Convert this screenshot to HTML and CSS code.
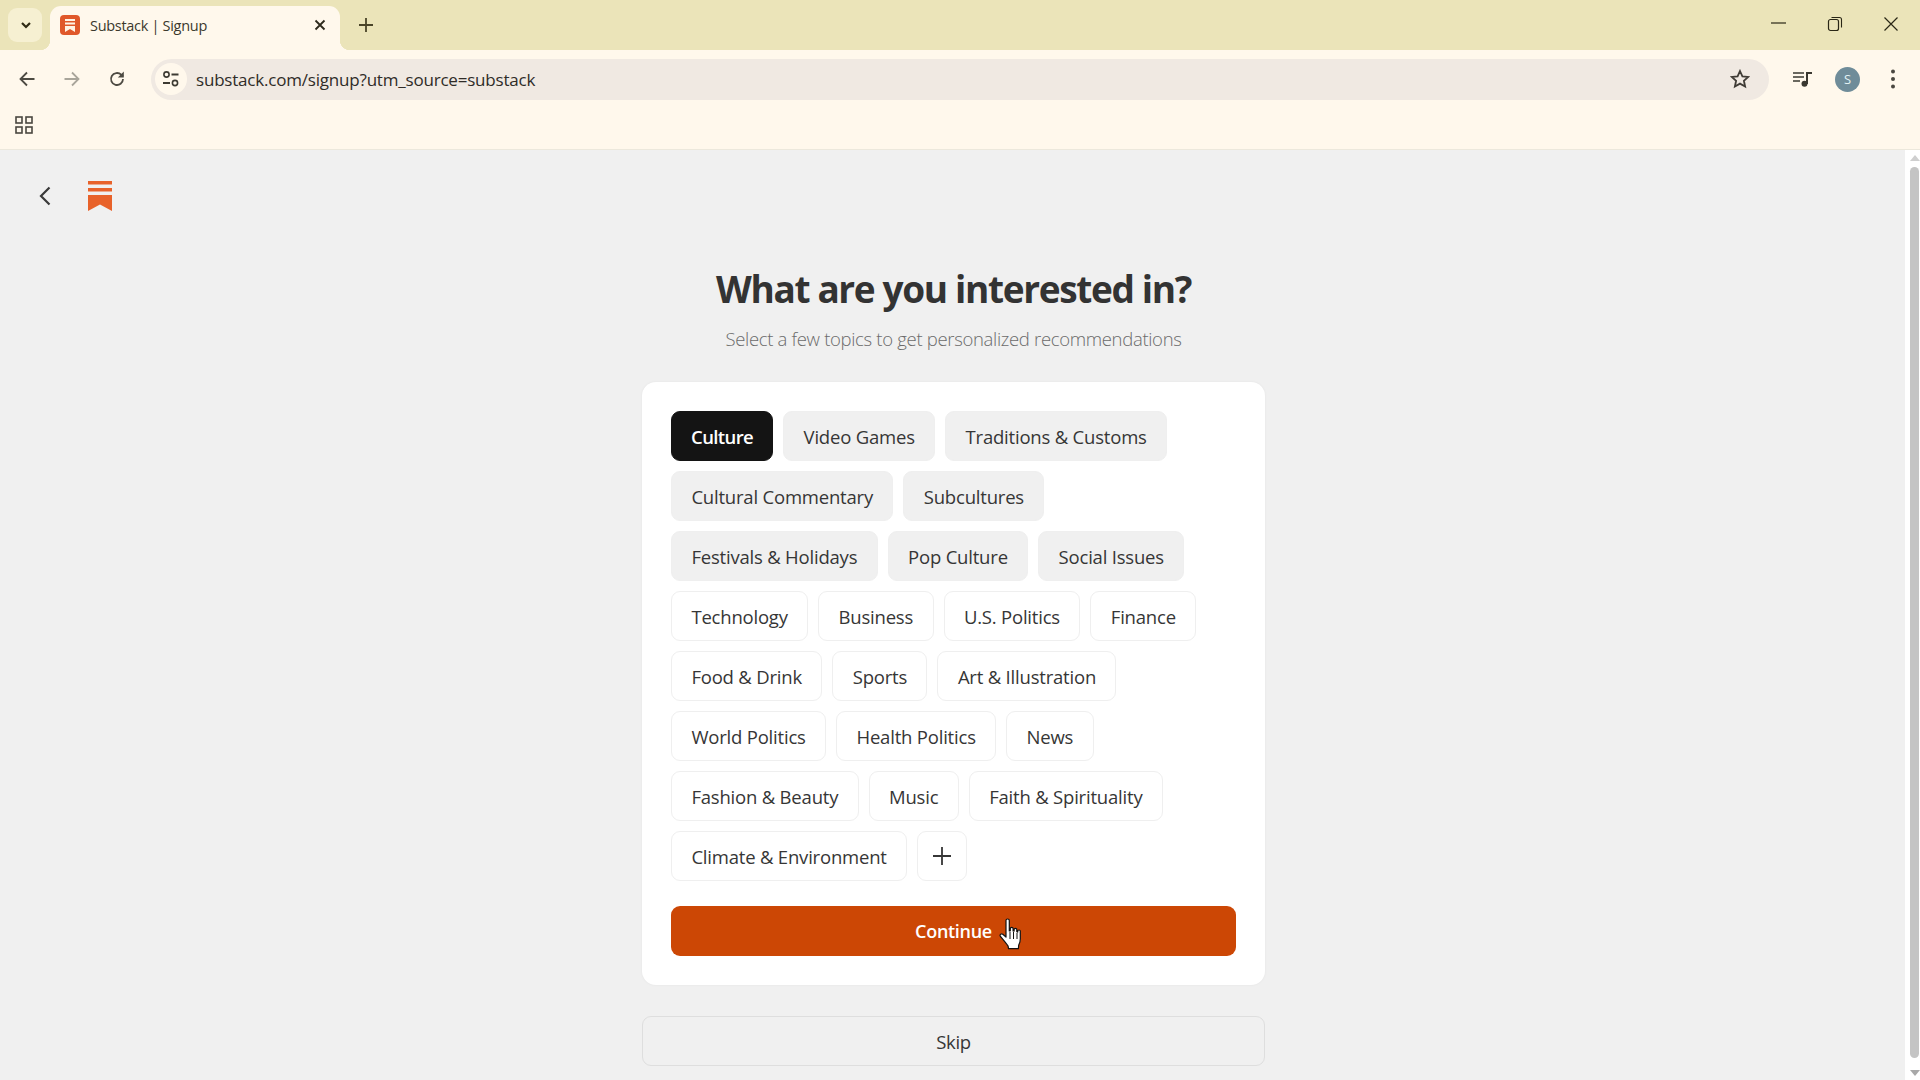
FILE: index.html
```html
<!DOCTYPE html>
<html lang="en">
<head>
<meta charset="utf-8">
<title>Substack | Signup</title>
<link rel="stylesheet" href="styles.css">
</head>
<body>
<header class="chrome">
  <div class="tabstrip">
    <button class="tablist" aria-label="Search tabs"><svg width="14" height="14" viewBox="0 0 14 14"><path d="M3 5l4 4 4-4" fill="none" stroke="#2f2a14" stroke-width="2.200"/></svg></button>
    <div class="tab">
      <svg class="favicon" width="20" height="20" viewBox="0 0 20 20"><rect width="20" height="20" rx="4" fill="#e0582a"/><path d="M5 4h10v2H5zM5 7.500h10v2H5zM5 11h10v6l-5-3-5 3z" fill="#fff3e4"/></svg>
      <span class="tab-title">Substack | Signup</span>
      <svg class="tab-close" width="12" height="12" viewBox="0 0 12 12"><path d="M1.500 1.500l9 9M10.500 1.500l-9 9" stroke="#2d2a1c" stroke-width="1.800"/></svg>
    </div>
    <svg class="newtab" width="14" height="14" viewBox="0 0 14 14"><path d="M7 0v14M0 7h14" stroke="#4a4428" stroke-width="1.800"/></svg>
    <div class="winctl">
      <svg width="16" height="16" viewBox="0 0 16 16"><path d="M0 7h15" stroke="#2a2716" stroke-width="1.200"/></svg>
      <svg width="16" height="16" viewBox="0 0 16 16"><rect x="1.500" y="3.500" width="10" height="11" rx="2" fill="none" stroke="#2a2716" stroke-width="1.200"/><path d="M4.500 1.500h8a2 2 0 0 1 2 2v8" fill="none" stroke="#2a2716" stroke-width="1.100"/></svg>
      <svg width="16" height="16" viewBox="0 0 16 16"><path d="M1.500 1.500l13 13M14.500 1.500l-13 13" stroke="#2a2716" stroke-width="1.200"/></svg>
    </div>
  </div>
  <div class="toolbar">
    <svg class="tb-ic" width="18" height="18" viewBox="0 0 18 18"><path d="M16.500 9H2.500M9 2.500L2.500 9 9 15.500" fill="none" stroke="#4d4a42" stroke-width="1.800"/></svg>
    <svg class="tb-ic" width="18" height="18" viewBox="0 0 18 18"><path d="M1.500 9h14M9 2.500L15.500 9 9 15.500" fill="none" stroke="#a9a59a" stroke-width="1.800"/></svg>
    <svg class="tb-ic" width="18" height="18" viewBox="0 0 18 18"><path d="M15 9a6 6 0 1 1-1.800-4.300L15 6.500" fill="none" stroke="#4d4a42" stroke-width="1.800"/><path d="M15.800 1.500v6h-6z" fill="#4d4a42"/></svg>
    <div class="omnibox">
      <span class="siteinfo"><svg width="18" height="18" viewBox="0 0 18 18"><circle cx="4.500" cy="4.500" r="2.600" fill="none" stroke="#3d3a32" stroke-width="1.600"/><path d="M9.500 4.500h7M1 13h7" stroke="#3d3a32" stroke-width="1.800"/><circle cx="13" cy="13" r="2.600" fill="none" stroke="#3d3a32" stroke-width="1.600"/></svg></span>
      <span class="url">substack.com/signup?utm_source=substack</span>
      <svg class="star" width="20" height="20" viewBox="0 0 20 20"><path d="M10 2l2.400 5.300 5.800.6-4.300 3.900 1.200 5.700-5.100-2.900-5.100 2.900 1.200-5.700L1.800 7.900l5.800-.6z" fill="none" stroke="#403c36" stroke-width="1.800"/></svg>
    </div>
    <div class="tb-right">
      <svg width="20" height="16" viewBox="0 0 20 16"><path d="M0 2h11M0 6h11M0 10h7" stroke="#3a3830" stroke-width="1.600"/><path d="M14 13V2h5" fill="none" stroke="#3a3830" stroke-width="2"/><circle cx="11.500" cy="12.800" r="3" fill="#3a3830"/></svg>
      <span class="avatar">S</span>
      <svg class="menu-dots" width="6" height="20" viewBox="0 0 6 20"><circle cx="3" cy="2.500" r="2" fill="#4a4740"/><circle cx="3" cy="10" r="2" fill="#4a4740"/><circle cx="3" cy="17.500" r="2" fill="#4a4740"/></svg>
    </div>
  </div>
  <div class="bookmarks">
    <svg width="18" height="18" viewBox="0 0 18 18"><g fill="none" stroke="#4a4740" stroke-width="1.600"><rect x="1" y="1" width="6" height="6"/><rect x="11" y="1" width="6" height="6"/><rect x="1" y="11" width="6" height="6"/><rect x="11" y="11" width="6" height="6"/></g></svg>
  </div>
</header>
<div class="viewport">
  <main class="page">
    <nav class="topnav">
      <svg width="12" height="20" viewBox="0 0 12 20"><path d="M10.500 1.500L2 10l8.500 8.500" fill="none" stroke="#3a3a3a" stroke-width="2.200"/></svg>
      <svg width="24" height="30" viewBox="0 0 24 30"><path d="M0 0h24v3.500H0zM0 7h24v3.500H0zM0 14h24v16l-12-6.500L0 30z" fill="#e8622a"/></svg>
    </nav>
    <section class="signup">
      <h1 class="title">What are you interested in?</h1>
      <p class="subtitle">Select a few topics to get personalized recommendations</p>
      <div class="card">
        <div class="chips">
          <span class="chip is-active">Culture</span>
          <span class="chip is-related">Video Games</span>
          <span class="chip is-related">Traditions &amp; Customs</span>
          <span class="chip is-related">Cultural Commentary</span>
          <span class="chip is-related">Subcultures</span>
          <span class="chip is-related">Festivals &amp; Holidays</span>
          <span class="chip is-related">Pop Culture</span>
          <span class="chip is-related">Social Issues</span>
          <span class="chip">Technology</span>
          <span class="chip">Business</span>
          <span class="chip">U.S. Politics</span>
          <span class="chip">Finance</span>
          <span class="chip">Food &amp; Drink</span>
          <span class="chip">Sports</span>
          <span class="chip">Art &amp; Illustration</span>
          <span class="chip">World Politics</span>
          <span class="chip">Health Politics</span>
          <span class="chip">News</span>
          <span class="chip">Fashion &amp; Beauty</span>
          <span class="chip">Music</span>
          <span class="chip">Faith &amp; Spirituality</span>
          <span class="chip">Climate &amp; Environment</span>
          <span class="chip chip-more"><svg width="18" height="18" viewBox="0 0 18 18"><path d="M9 0v18M0 9h18" stroke="#363636" stroke-width="1.800"/></svg></span>
        </div>
        <button class="continue">Continue
          <svg class="cursor" width="26" height="34" viewBox="0 0 26 34"><path d="M7 2.500c0-2 3.300-2 3.300 0V13l1-.2V10.500c0-1.600 2.800-1.600 2.800 0v2.500l1 .2v-1.700c0-1.600 2.700-1.600 2.700 0v2.300l.9.300v-1c0-1.500 2.600-1.500 2.600 0v8c0 3-.6 4-1.600 6l-.3 3.500H9.500l-.4-2.500C7 25 4 21.500 1.500 18.500c-1.300-1.600.6-3.400 2.300-2.300L7 19z" fill="#fff" stroke="#111" stroke-width="1.200" stroke-linejoin="round"/><path d="M11 14v7M14.500 14v7M18 15v6" stroke="#111" stroke-width="1"/></svg>
        </button>
      </div>
      <button class="skip">Skip</button>
    </section>
  </main>
  <aside class="scrollbar">
    <span class="arrow-up"></span>
    <span class="thumb"></span>
    <span class="arrow-down"></span>
  </aside>
</div>
</body>
</html>
```
FILE: styles.css
```css
* { box-sizing: border-box; }
html, body { margin: 0; height: 100%; overflow: hidden; }
body {
  display: flex;
  flex-direction: column;
  font-family: "Open Sans", "Noto Sans", sans-serif;
  background: #f0f0f0;
  color: #363636;
}
.chrome { flex: none; }
.tabstrip {
  height: 50px;
  background: #ebe4b9;
  display: flex;
  align-items: flex-start;
  padding-left: 8px;
}
.tablist {
  width: 34px;
  height: 34px;
  margin-top: 8px;
  border: 0;
  border-radius: 9px;
  background: #f6f0d2;
  display: flex;
  align-items: center;
  justify-content: center;
  padding: 0 0 0 2px;
}
.tab {
  position: relative;
  width: 290px;
  height: 44px;
  margin: 6px 0 0 8px;
  background: #fff8ec;
  border-radius: 11px 11px 0 0;
  display: flex;
  align-items: center;
  padding: 0 14px 6px 10px;
  gap: 10px;
}
.tab::before, .tab::after {
  content: "";
  position: absolute;
  bottom: 0;
  width: 10px;
  height: 10px;
}
.tab::before { left: -10px; background: radial-gradient(circle at 0 0, transparent 10px, #fff8ec 10.500px); }
.tab::after { right: -10px; background: radial-gradient(circle at 100% 0, transparent 10px, #fff8ec 10.500px); }
.tab-title {
  flex: 1;
  font-size: 14.500px;
  color: #3b382c;
  letter-spacing: -0.3px;
}
.newtab { margin: 18px 0 0 19px; }
.winctl {
  margin-left: auto;
  display: flex;
  gap: 40px;
  padding: 16px 21px 0 0;
}
.toolbar {
  height: 50px;
  background: #fff8ec;
  display: flex;
  align-items: center;
  padding: 8px 24px 0 18px;
  position: relative;
}
.tb-ic { margin-right: 27px; flex: none; }
.tb-ic:nth-child(3) { margin-right: 25px; }
.omnibox {
  width: 1618px;
  height: 41px;
  background: #f0e9e2;
  border-radius: 21px;
  display: flex;
  align-items: center;
  padding: 0 19px 0 4px;
}
.siteinfo {
  width: 32px;
  height: 32px;
  border-radius: 50%;
  background: #fff8ec;
  display: flex;
  align-items: center;
  justify-content: center;
  margin-right: 9px;
}
.url {
  flex: 1;
  font-size: 17px;
  color: #2f2c28;
  letter-spacing: -0.2px;
}
.tb-right {
  flex: 1;
  display: flex;
  align-items: center;
  justify-content: flex-end;
  gap: 22px;
}
.menu-dots { margin-left: 8px; }
.avatar {
  width: 25px;
  height: 25px;
  border-radius: 50%;
  background: #6f8c99;
  color: #e3f2f4;
  font-size: 13px;
  display: flex;
  align-items: center;
  justify-content: center;
}
.bookmarks {
  height: 50px;
  background: #fff8ec;
  border-bottom: 1px solid #ece8dc;
  display: flex;
  align-items: center;
  padding-left: 15px;
}
.viewport {
  flex: 1;
  min-height: 0;
  display: flex;
}
.page {
  flex: 1;
  min-width: 0;
  background: #f0f0f0;
}
.topnav {
  height: 66px;
  padding: 31px 0 0 39px;
  display: flex;
  align-items: flex-start;
  gap: 37px;
}
.topnav svg:first-child { margin-top: 5px; }
.signup {
  width: 625px;
  margin: 0 auto;
  padding-left: 2px;
  display: flex;
  flex-direction: column;
  align-items: center;
}
.title {
  margin: 45px 0 0;
  font-size: 37px;
  line-height: 56px;
  font-weight: 700;
  letter-spacing: -1.35px;
  color: #333;
  white-space: nowrap;
}
.subtitle {
  margin: 7px 0 0;
  font-size: 18.500px;
  line-height: 30px;
  font-weight: 300;
  color: #6b6b6b;
  letter-spacing: -0.32px;
  white-space: nowrap;
}
.card {
  width: 100%;
  margin-top: 28px;
  padding: 29px;
  background: #fff;
  border-radius: 14px;
  box-shadow: 0 0 3px rgba(0,0,0,.05);
  display: flex;
  flex-direction: column;
  gap: 25px;
}
.chips {
  display: flex;
  flex-wrap: wrap;
  gap: 10px;
  align-content: flex-start;
}
.chip {
  height: 50px;
  padding: 0 19.400px;
  border: 1px solid #efefef;
  border-radius: 9px;
  background: #fff;
  display: flex;
  align-items: center;
  font-size: 18.500px;
  font-weight: 500;
  color: #363636;
  letter-spacing: -0.2px;
  white-space: nowrap;
}
.chip.is-related { background: #f0f0f0; }
.chip.is-active { background: #141414; border-color: #141414; color: #fff; font-weight: 600; letter-spacing: -0.6px; padding: 0 19px; }
.chip-more { width: 50px; padding: 0; justify-content: center; }
.continue {
  position: relative;
  height: 50px;
  border: 0;
  border-radius: 9px;
  background: #cc4705;
  color: #fff;
  font: 600 18px "Open Sans", sans-serif;
  letter-spacing: -0.3px;
  padding: 0;
}
.cursor {
  position: absolute;
  left: 328px;
  top: 12px;
}
.skip {
  width: 100%;
  height: 50px;
  margin-top: 31px;
  border: 1px solid #dedede;
  border-radius: 9px;
  background: #f0f0f0;
  color: #363636;
  font: 500 18.500px "Open Sans", sans-serif;
  letter-spacing: -0.3px;
  padding: 0;
}
.scrollbar {
  width: 15px;
  flex: none;
  background: #fff;
  display: flex;
  flex-direction: column;
  align-items: center;
  padding: 5px 0 4px 4px;
}
.arrow-up, .arrow-down {
  width: 0;
  height: 0;
  border-left: 5px solid transparent;
  border-right: 5px solid transparent;
}
.arrow-up { border-bottom: 6px solid #cfcfcf; }
.arrow-down { border-top: 6px solid #a8a8a8; }
.thumb {
  flex: 1;
  width: 9px;
  margin: 6px 0 12px;
  background: #c4c4c4;
  border-radius: 5px;
}
```
